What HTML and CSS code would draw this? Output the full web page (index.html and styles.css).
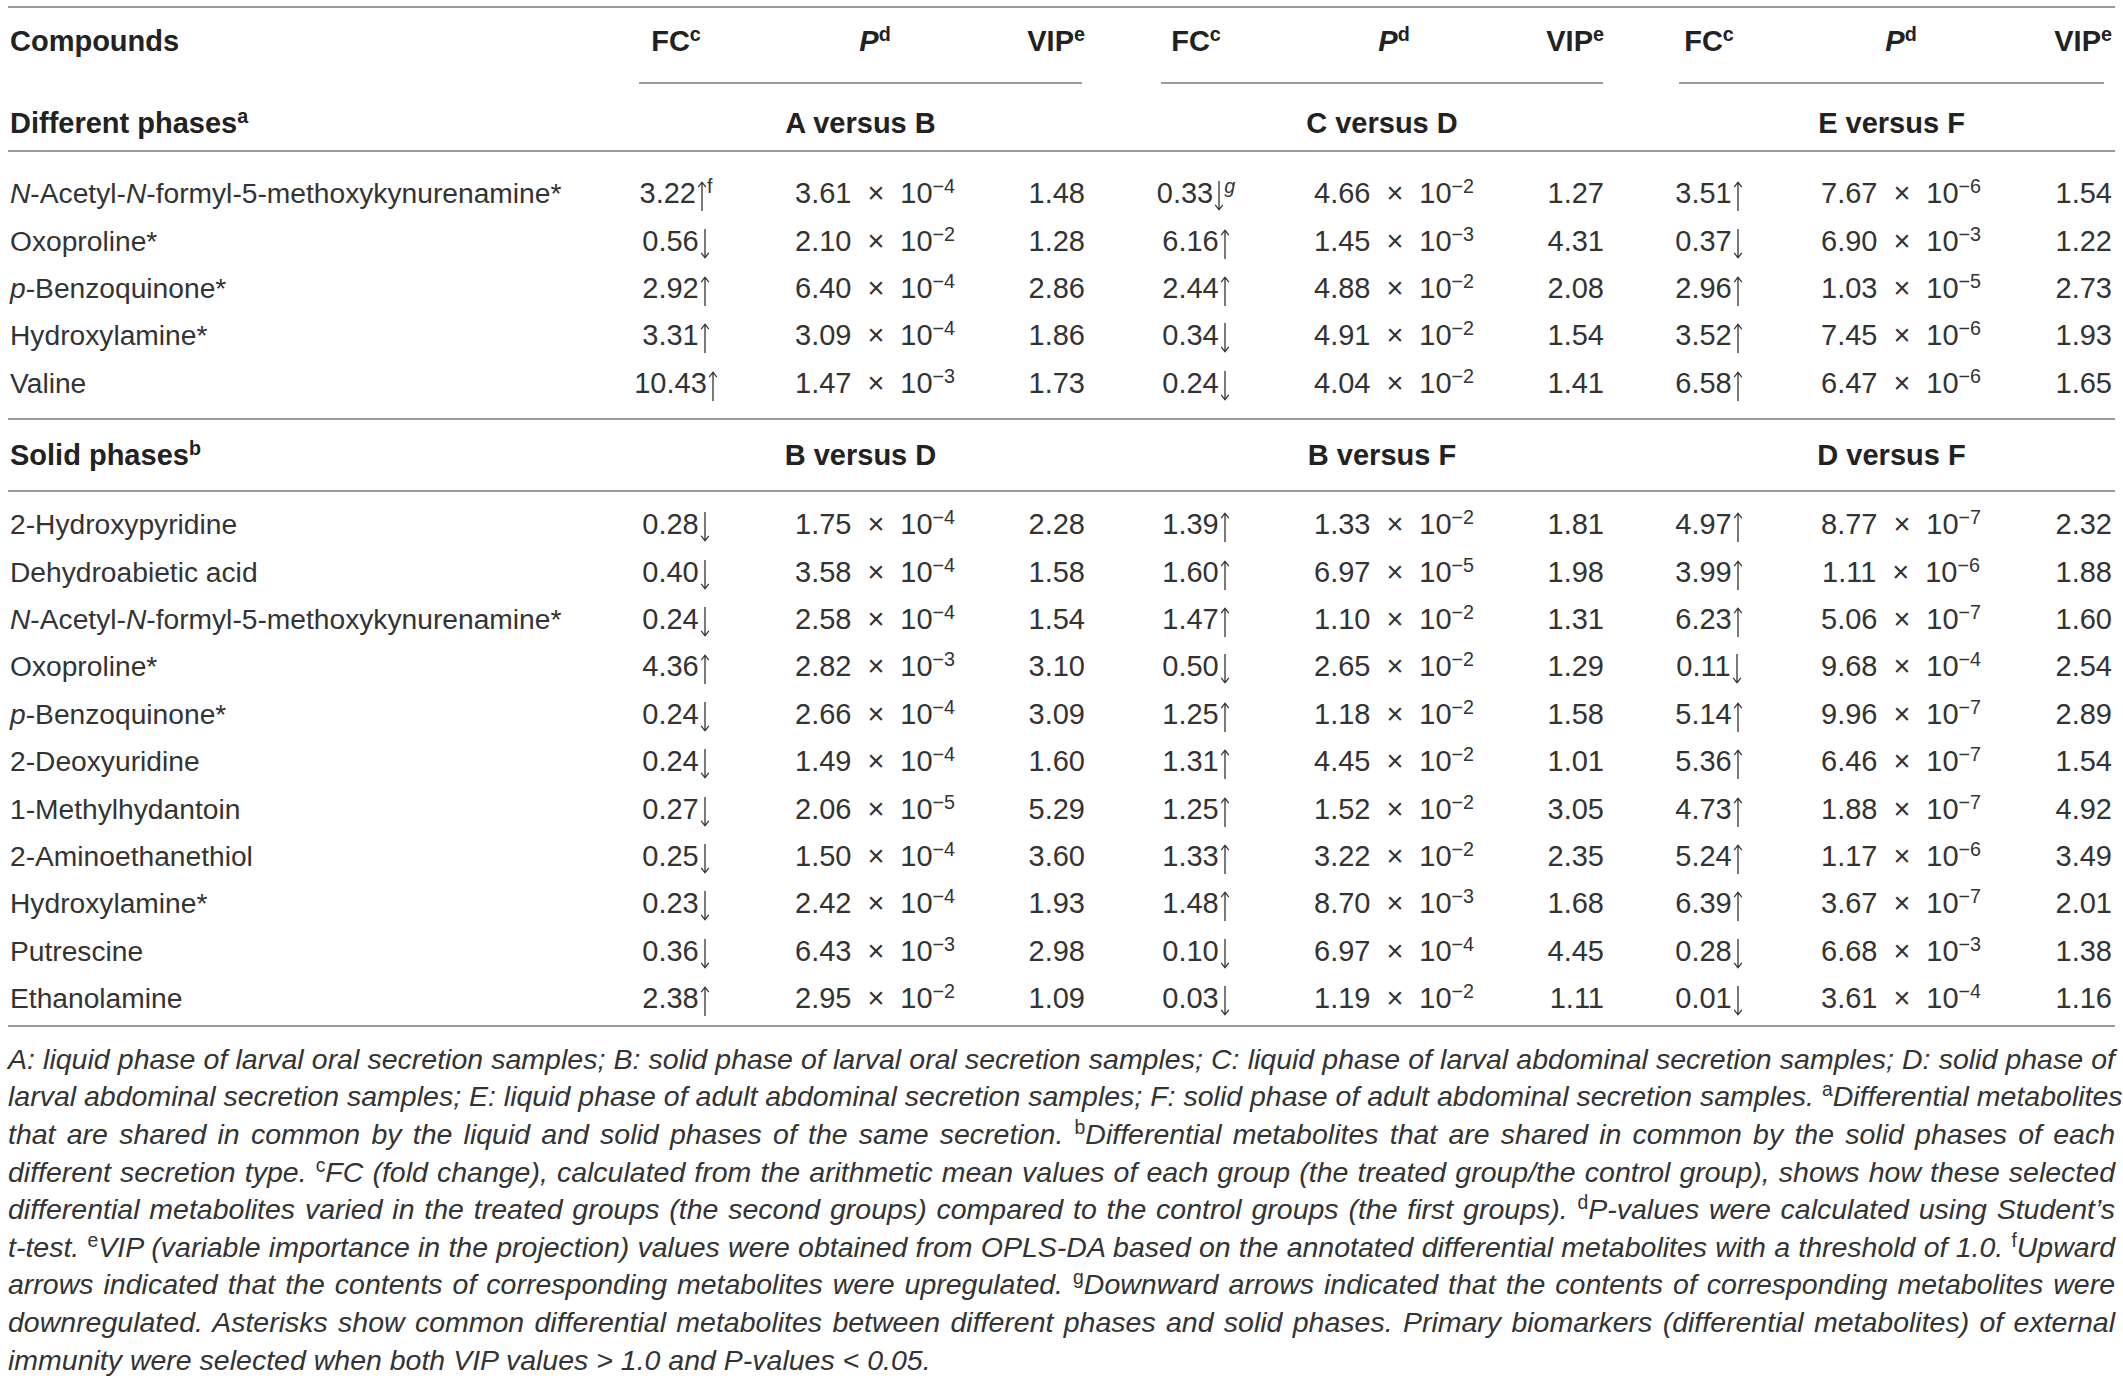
FILE: index.html
```html
<!DOCTYPE html>
<html lang="en">
<head>
<meta charset="utf-8">
<title>Differential metabolites</title>
<link rel="stylesheet" href="styles.css">
</head>
<body>
<div class="table">
  <div class="row head">
    <div class="name">Compounds</div>
    <div class="c">FC<sup>c</sup></div><div class="c"><i>P</i><sup>d</sup></div><div class="c vip">VIP<sup>e</sup></div>
    <span></span>
    <div class="c">FC<sup>c</sup></div><div class="c"><i>P</i><sup>d</sup></div><div class="c vip">VIP<sup>e</sup></div>
    <span></span>
    <div class="c">FC<sup>c</sup></div><div class="c"><i>P</i><sup>d</sup></div><div class="c vip">VIP<sup>e</sup></div>
  </div>
  <div class="row labels ruled">
    <div class="name">Different phases<sup>a</sup></div>
    <div class="grp g1">A versus B</div>
    <div class="grp g2">C versus D</div>
    <div class="grp g3">E versus F</div>
  </div>
  <div class="sec sec1">
    <div class="row"><div class="name"><i>N</i>-Acetyl-<i>N</i>-formyl-5-methoxykynurenamine*</div><div class="c">3.22<svg class="arr" viewBox="0 0 10 30" aria-label="↑"><path d="M5 1.5V30M1.2 6.2L5 1.2L8.8 6.2"/></svg><sup>f</sup></div><div class="c">3.61<span class="x">×</span>10<sup>−4</sup></div><div class="c vip">1.48</div><span></span><div class="c">0.33<svg class="arr" viewBox="0 0 10 30" aria-label="↓"><path d="M5 0V28.5M1.2 23.8L5 28.8L8.8 23.8"/></svg><sup><i>g</i></sup></div><div class="c">4.66<span class="x">×</span>10<sup>−2</sup></div><div class="c vip">1.27</div><span></span><div class="c">3.51<svg class="arr" viewBox="0 0 10 30" aria-label="↑"><path d="M5 1.5V30M1.2 6.2L5 1.2L8.8 6.2"/></svg></div><div class="c">7.67<span class="x">×</span>10<sup>−6</sup></div><div class="c vip">1.54</div></div>
    <div class="row"><div class="name">Oxoproline*</div><div class="c">0.56<svg class="arr" viewBox="0 0 10 30" aria-label="↓"><path d="M5 0V28.5M1.2 23.8L5 28.8L8.8 23.8"/></svg></div><div class="c">2.10<span class="x">×</span>10<sup>−2</sup></div><div class="c vip">1.28</div><span></span><div class="c">6.16<svg class="arr" viewBox="0 0 10 30" aria-label="↑"><path d="M5 1.5V30M1.2 6.2L5 1.2L8.8 6.2"/></svg></div><div class="c">1.45<span class="x">×</span>10<sup>−3</sup></div><div class="c vip">4.31</div><span></span><div class="c">0.37<svg class="arr" viewBox="0 0 10 30" aria-label="↓"><path d="M5 0V28.5M1.2 23.8L5 28.8L8.8 23.8"/></svg></div><div class="c">6.90<span class="x">×</span>10<sup>−3</sup></div><div class="c vip">1.22</div></div>
    <div class="row"><div class="name"><i>p</i>-Benzoquinone*</div><div class="c">2.92<svg class="arr" viewBox="0 0 10 30" aria-label="↑"><path d="M5 1.5V30M1.2 6.2L5 1.2L8.8 6.2"/></svg></div><div class="c">6.40<span class="x">×</span>10<sup>−4</sup></div><div class="c vip">2.86</div><span></span><div class="c">2.44<svg class="arr" viewBox="0 0 10 30" aria-label="↑"><path d="M5 1.5V30M1.2 6.2L5 1.2L8.8 6.2"/></svg></div><div class="c">4.88<span class="x">×</span>10<sup>−2</sup></div><div class="c vip">2.08</div><span></span><div class="c">2.96<svg class="arr" viewBox="0 0 10 30" aria-label="↑"><path d="M5 1.5V30M1.2 6.2L5 1.2L8.8 6.2"/></svg></div><div class="c">1.03<span class="x">×</span>10<sup>−5</sup></div><div class="c vip">2.73</div></div>
    <div class="row"><div class="name">Hydroxylamine*</div><div class="c">3.31<svg class="arr" viewBox="0 0 10 30" aria-label="↑"><path d="M5 1.5V30M1.2 6.2L5 1.2L8.8 6.2"/></svg></div><div class="c">3.09<span class="x">×</span>10<sup>−4</sup></div><div class="c vip">1.86</div><span></span><div class="c">0.34<svg class="arr" viewBox="0 0 10 30" aria-label="↓"><path d="M5 0V28.5M1.2 23.8L5 28.8L8.8 23.8"/></svg></div><div class="c">4.91<span class="x">×</span>10<sup>−2</sup></div><div class="c vip">1.54</div><span></span><div class="c">3.52<svg class="arr" viewBox="0 0 10 30" aria-label="↑"><path d="M5 1.5V30M1.2 6.2L5 1.2L8.8 6.2"/></svg></div><div class="c">7.45<span class="x">×</span>10<sup>−6</sup></div><div class="c vip">1.93</div></div>
    <div class="row"><div class="name">Valine</div><div class="c">10.43<svg class="arr" viewBox="0 0 10 30" aria-label="↑"><path d="M5 1.5V30M1.2 6.2L5 1.2L8.8 6.2"/></svg></div><div class="c">1.47<span class="x">×</span>10<sup>−3</sup></div><div class="c vip">1.73</div><span></span><div class="c">0.24<svg class="arr" viewBox="0 0 10 30" aria-label="↓"><path d="M5 0V28.5M1.2 23.8L5 28.8L8.8 23.8"/></svg></div><div class="c">4.04<span class="x">×</span>10<sup>−2</sup></div><div class="c vip">1.41</div><span></span><div class="c">6.58<svg class="arr" viewBox="0 0 10 30" aria-label="↑"><path d="M5 1.5V30M1.2 6.2L5 1.2L8.8 6.2"/></svg></div><div class="c">6.47<span class="x">×</span>10<sup>−6</sup></div><div class="c vip">1.65</div></div>
  </div>
  <div class="row labels labels2 ruled">
    <div class="name">Solid phases<sup>b</sup></div>
    <div class="grp g1 plain">B versus D</div>
    <div class="grp g2 plain">B versus F</div>
    <div class="grp g3 plain">D versus F</div>
  </div>
  <div class="sec sec2">
    <div class="row"><div class="name">2-Hydroxypyridine</div><div class="c">0.28<svg class="arr" viewBox="0 0 10 30" aria-label="↓"><path d="M5 0V28.5M1.2 23.8L5 28.8L8.8 23.8"/></svg></div><div class="c">1.75<span class="x">×</span>10<sup>−4</sup></div><div class="c vip">2.28</div><span></span><div class="c">1.39<svg class="arr" viewBox="0 0 10 30" aria-label="↑"><path d="M5 1.5V30M1.2 6.2L5 1.2L8.8 6.2"/></svg></div><div class="c">1.33<span class="x">×</span>10<sup>−2</sup></div><div class="c vip">1.81</div><span></span><div class="c">4.97<svg class="arr" viewBox="0 0 10 30" aria-label="↑"><path d="M5 1.5V30M1.2 6.2L5 1.2L8.8 6.2"/></svg></div><div class="c">8.77<span class="x">×</span>10<sup>−7</sup></div><div class="c vip">2.32</div></div>
    <div class="row"><div class="name">Dehydroabietic acid</div><div class="c">0.40<svg class="arr" viewBox="0 0 10 30" aria-label="↓"><path d="M5 0V28.5M1.2 23.8L5 28.8L8.8 23.8"/></svg></div><div class="c">3.58<span class="x">×</span>10<sup>−4</sup></div><div class="c vip">1.58</div><span></span><div class="c">1.60<svg class="arr" viewBox="0 0 10 30" aria-label="↑"><path d="M5 1.5V30M1.2 6.2L5 1.2L8.8 6.2"/></svg></div><div class="c">6.97<span class="x">×</span>10<sup>−5</sup></div><div class="c vip">1.98</div><span></span><div class="c">3.99<svg class="arr" viewBox="0 0 10 30" aria-label="↑"><path d="M5 1.5V30M1.2 6.2L5 1.2L8.8 6.2"/></svg></div><div class="c">1.11<span class="x">×</span>10<sup>−6</sup></div><div class="c vip">1.88</div></div>
    <div class="row"><div class="name"><i>N</i>-Acetyl-<i>N</i>-formyl-5-methoxykynurenamine*</div><div class="c">0.24<svg class="arr" viewBox="0 0 10 30" aria-label="↓"><path d="M5 0V28.5M1.2 23.8L5 28.8L8.8 23.8"/></svg></div><div class="c">2.58<span class="x">×</span>10<sup>−4</sup></div><div class="c vip">1.54</div><span></span><div class="c">1.47<svg class="arr" viewBox="0 0 10 30" aria-label="↑"><path d="M5 1.5V30M1.2 6.2L5 1.2L8.8 6.2"/></svg></div><div class="c">1.10<span class="x">×</span>10<sup>−2</sup></div><div class="c vip">1.31</div><span></span><div class="c">6.23<svg class="arr" viewBox="0 0 10 30" aria-label="↑"><path d="M5 1.5V30M1.2 6.2L5 1.2L8.8 6.2"/></svg></div><div class="c">5.06<span class="x">×</span>10<sup>−7</sup></div><div class="c vip">1.60</div></div>
    <div class="row"><div class="name">Oxoproline*</div><div class="c">4.36<svg class="arr" viewBox="0 0 10 30" aria-label="↑"><path d="M5 1.5V30M1.2 6.2L5 1.2L8.8 6.2"/></svg></div><div class="c">2.82<span class="x">×</span>10<sup>−3</sup></div><div class="c vip">3.10</div><span></span><div class="c">0.50<svg class="arr" viewBox="0 0 10 30" aria-label="↓"><path d="M5 0V28.5M1.2 23.8L5 28.8L8.8 23.8"/></svg></div><div class="c">2.65<span class="x">×</span>10<sup>−2</sup></div><div class="c vip">1.29</div><span></span><div class="c">0.11<svg class="arr" viewBox="0 0 10 30" aria-label="↓"><path d="M5 0V28.5M1.2 23.8L5 28.8L8.8 23.8"/></svg></div><div class="c">9.68<span class="x">×</span>10<sup>−4</sup></div><div class="c vip">2.54</div></div>
    <div class="row"><div class="name"><i>p</i>-Benzoquinone*</div><div class="c">0.24<svg class="arr" viewBox="0 0 10 30" aria-label="↓"><path d="M5 0V28.5M1.2 23.8L5 28.8L8.8 23.8"/></svg></div><div class="c">2.66<span class="x">×</span>10<sup>−4</sup></div><div class="c vip">3.09</div><span></span><div class="c">1.25<svg class="arr" viewBox="0 0 10 30" aria-label="↑"><path d="M5 1.5V30M1.2 6.2L5 1.2L8.8 6.2"/></svg></div><div class="c">1.18<span class="x">×</span>10<sup>−2</sup></div><div class="c vip">1.58</div><span></span><div class="c">5.14<svg class="arr" viewBox="0 0 10 30" aria-label="↑"><path d="M5 1.5V30M1.2 6.2L5 1.2L8.8 6.2"/></svg></div><div class="c">9.96<span class="x">×</span>10<sup>−7</sup></div><div class="c vip">2.89</div></div>
    <div class="row"><div class="name">2-Deoxyuridine</div><div class="c">0.24<svg class="arr" viewBox="0 0 10 30" aria-label="↓"><path d="M5 0V28.5M1.2 23.8L5 28.8L8.8 23.8"/></svg></div><div class="c">1.49<span class="x">×</span>10<sup>−4</sup></div><div class="c vip">1.60</div><span></span><div class="c">1.31<svg class="arr" viewBox="0 0 10 30" aria-label="↑"><path d="M5 1.5V30M1.2 6.2L5 1.2L8.8 6.2"/></svg></div><div class="c">4.45<span class="x">×</span>10<sup>−2</sup></div><div class="c vip">1.01</div><span></span><div class="c">5.36<svg class="arr" viewBox="0 0 10 30" aria-label="↑"><path d="M5 1.5V30M1.2 6.2L5 1.2L8.8 6.2"/></svg></div><div class="c">6.46<span class="x">×</span>10<sup>−7</sup></div><div class="c vip">1.54</div></div>
    <div class="row"><div class="name">1-Methylhydantoin</div><div class="c">0.27<svg class="arr" viewBox="0 0 10 30" aria-label="↓"><path d="M5 0V28.5M1.2 23.8L5 28.8L8.8 23.8"/></svg></div><div class="c">2.06<span class="x">×</span>10<sup>−5</sup></div><div class="c vip">5.29</div><span></span><div class="c">1.25<svg class="arr" viewBox="0 0 10 30" aria-label="↑"><path d="M5 1.5V30M1.2 6.2L5 1.2L8.8 6.2"/></svg></div><div class="c">1.52<span class="x">×</span>10<sup>−2</sup></div><div class="c vip">3.05</div><span></span><div class="c">4.73<svg class="arr" viewBox="0 0 10 30" aria-label="↑"><path d="M5 1.5V30M1.2 6.2L5 1.2L8.8 6.2"/></svg></div><div class="c">1.88<span class="x">×</span>10<sup>−7</sup></div><div class="c vip">4.92</div></div>
    <div class="row"><div class="name">2-Aminoethanethiol</div><div class="c">0.25<svg class="arr" viewBox="0 0 10 30" aria-label="↓"><path d="M5 0V28.5M1.2 23.8L5 28.8L8.8 23.8"/></svg></div><div class="c">1.50<span class="x">×</span>10<sup>−4</sup></div><div class="c vip">3.60</div><span></span><div class="c">1.33<svg class="arr" viewBox="0 0 10 30" aria-label="↑"><path d="M5 1.5V30M1.2 6.2L5 1.2L8.8 6.2"/></svg></div><div class="c">3.22<span class="x">×</span>10<sup>−2</sup></div><div class="c vip">2.35</div><span></span><div class="c">5.24<svg class="arr" viewBox="0 0 10 30" aria-label="↑"><path d="M5 1.5V30M1.2 6.2L5 1.2L8.8 6.2"/></svg></div><div class="c">1.17<span class="x">×</span>10<sup>−6</sup></div><div class="c vip">3.49</div></div>
    <div class="row"><div class="name">Hydroxylamine*</div><div class="c">0.23<svg class="arr" viewBox="0 0 10 30" aria-label="↓"><path d="M5 0V28.5M1.2 23.8L5 28.8L8.8 23.8"/></svg></div><div class="c">2.42<span class="x">×</span>10<sup>−4</sup></div><div class="c vip">1.93</div><span></span><div class="c">1.48<svg class="arr" viewBox="0 0 10 30" aria-label="↑"><path d="M5 1.5V30M1.2 6.2L5 1.2L8.8 6.2"/></svg></div><div class="c">8.70<span class="x">×</span>10<sup>−3</sup></div><div class="c vip">1.68</div><span></span><div class="c">6.39<svg class="arr" viewBox="0 0 10 30" aria-label="↑"><path d="M5 1.5V30M1.2 6.2L5 1.2L8.8 6.2"/></svg></div><div class="c">3.67<span class="x">×</span>10<sup>−7</sup></div><div class="c vip">2.01</div></div>
    <div class="row"><div class="name">Putrescine</div><div class="c">0.36<svg class="arr" viewBox="0 0 10 30" aria-label="↓"><path d="M5 0V28.5M1.2 23.8L5 28.8L8.8 23.8"/></svg></div><div class="c">6.43<span class="x">×</span>10<sup>−3</sup></div><div class="c vip">2.98</div><span></span><div class="c">0.10<svg class="arr" viewBox="0 0 10 30" aria-label="↓"><path d="M5 0V28.5M1.2 23.8L5 28.8L8.8 23.8"/></svg></div><div class="c">6.97<span class="x">×</span>10<sup>−4</sup></div><div class="c vip">4.45</div><span></span><div class="c">0.28<svg class="arr" viewBox="0 0 10 30" aria-label="↓"><path d="M5 0V28.5M1.2 23.8L5 28.8L8.8 23.8"/></svg></div><div class="c">6.68<span class="x">×</span>10<sup>−3</sup></div><div class="c vip">1.38</div></div>
    <div class="row"><div class="name">Ethanolamine</div><div class="c">2.38<svg class="arr" viewBox="0 0 10 30" aria-label="↑"><path d="M5 1.5V30M1.2 6.2L5 1.2L8.8 6.2"/></svg></div><div class="c">2.95<span class="x">×</span>10<sup>−2</sup></div><div class="c vip">1.09</div><span></span><div class="c">0.03<svg class="arr" viewBox="0 0 10 30" aria-label="↓"><path d="M5 0V28.5M1.2 23.8L5 28.8L8.8 23.8"/></svg></div><div class="c">1.19<span class="x">×</span>10<sup>−2</sup></div><div class="c vip">1.11</div><span></span><div class="c">0.01<svg class="arr" viewBox="0 0 10 30" aria-label="↓"><path d="M5 0V28.5M1.2 23.8L5 28.8L8.8 23.8"/></svg></div><div class="c">3.61<span class="x">×</span>10<sup>−4</sup></div><div class="c vip">1.16</div></div>
  </div>
</div>
<div class="notes">
  <span class="ln">A: liquid phase of larval oral secretion samples; B: solid phase of larval oral secretion samples; C: liquid phase of larval abdominal secretion samples; D: solid phase of</span>
  <span class="ln">larval abdominal secretion samples; E: liquid phase of adult abdominal secretion samples; F: solid phase of adult abdominal secretion samples. <sup>a</sup>Differential metabolites</span>
  <span class="ln">that are shared in common by the liquid and solid phases of the same secretion. <sup>b</sup>Differential metabolites that are shared in common by the solid phases of each</span>
  <span class="ln">different secretion type. <sup>c</sup>FC (fold change), calculated from the arithmetic mean values of each group (the treated group/the control group), shows how these selected</span>
  <span class="ln">differential metabolites varied in the treated groups (the second groups) compared to the control groups (the first groups). <sup>d</sup>P-values were calculated using Student’s</span>
  <span class="ln">t-test. <sup>e</sup>VIP (variable importance in the projection) values were obtained from OPLS-DA based on the annotated differential metabolites with a threshold of 1.0. <sup>f</sup>Upward</span>
  <span class="ln">arrows indicated that the contents of corresponding metabolites were upregulated. <sup>g</sup>Downward arrows indicated that the contents of corresponding metabolites were</span>
  <span class="ln">downregulated. Asterisks show common differential metabolites between different phases and solid phases. Primary biomarkers (differential metabolites) of external</span>
  <span class="ln last">immunity were selected when both VIP values &gt; 1.0 and P-values &lt; 0.05.</span>
</div>
</body>
</html>
```

FILE: styles.css
```css
html, body {
  margin: 0;
  background: #ffffff;
}

body {
  padding: 6px 8px 0;
  font-family: "Liberation Sans", Arial, sans-serif;
  color: #333333;
}

.table {
  border-top: 2px solid #9a9a9a;
  border-bottom: 2px solid #9a9a9a;
}

.row {
  display: grid;
  grid-template-columns: 618px 100px 298px 61px 61px 100px 296px 62px 55px 100px 284px 69px;
  padding-right: 3px;
  font-size: 29px;
  white-space: nowrap;
}

.name {
  text-align: left;
  padding-left: 2px;
}

.sec .name {
  font-size: 28.2px;
}

.c {
  text-align: center;
}

.c.vip {
  text-align: right;
}

sup {
  font-size: 0.68em;
  line-height: 0;
  vertical-align: 0.52em;
  font-style: normal;
}

.x {
  margin: 0 0.55em;
}

.arr {
  width: 10px;
  height: 30px;
  margin-left: 1px;
  vertical-align: -8px;
  fill: none;
  stroke: currentColor;
  stroke-width: 1.3;
}

.head {
  box-sizing: border-box;
  height: 74px;
  padding-top: 16px;
  line-height: 34px;
  font-weight: bold;
  color: #222222;
}

.labels {
  box-sizing: border-box;
  height: 70px;
  line-height: 34px;
  font-weight: bold;
  color: #222222;
}

.labels .name {
  padding-top: 24px;
}

.grp {
  text-align: center;
  border-top: 2px solid #9a9a9a;
  padding-top: 22px;
}

.g1 {
  grid-column: 2 / span 3;
  margin: 0 3px 0 13px;
}

.g2 {
  grid-column: 6 / span 3;
  margin: 0 1px 0 15px;
}

.g3 {
  grid-column: 10 / span 3;
  margin: 0 8px 0 20px;
}

.ruled {
  border-bottom: 2px solid #9a9a9a;
}

.labels2 {
  height: 72px;
}

.labels2 .name {
  padding-top: 18px;
}

.grp.plain {
  border-top: 0;
  padding-top: 18px;
}

.sec .row {
  height: 47.4px;
  line-height: 47.4px;
}

.sec1 {
  padding: 18.3px 0 10.7px;
  border-bottom: 2px solid #9a9a9a;
}

.sec2 {
  padding: 9.3px 0 2.3px;
}

.notes {
  padding-top: 14px;
  font-size: 28.5px;
  line-height: 37.6px;
  font-style: italic;
  color: #333333;
}

.ln {
  display: block;
  text-align: justify;
  text-align-last: justify;
  white-space: nowrap;
}

.ln.last {
  text-align: left;
  text-align-last: left;
}
```
